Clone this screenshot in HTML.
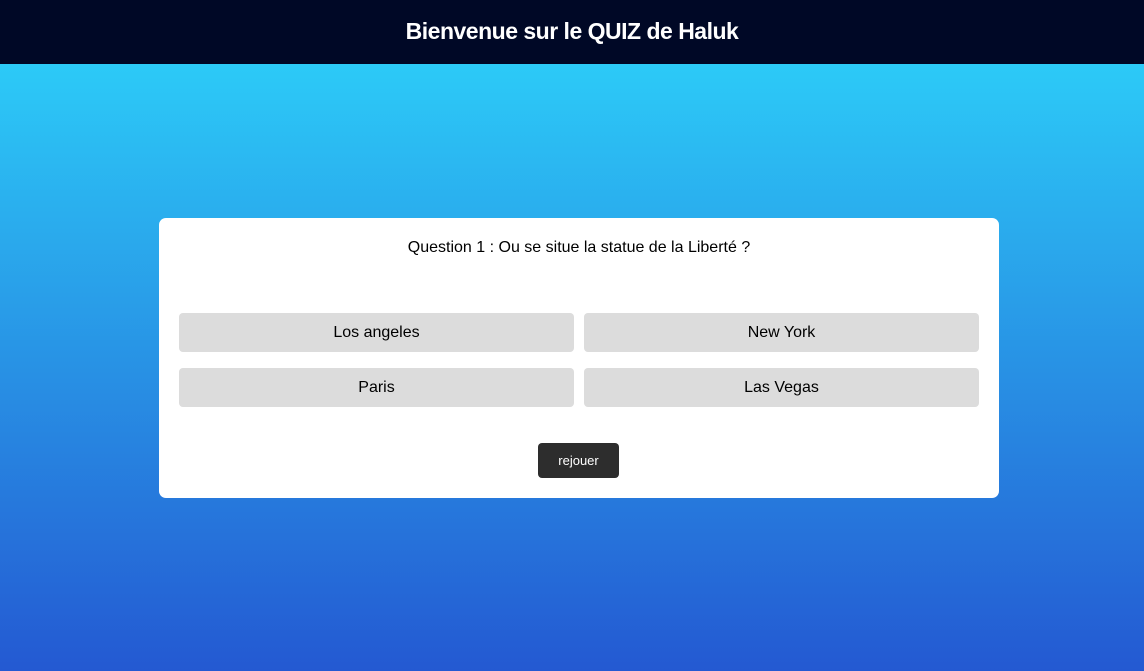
<!DOCTYPE html>
<html><head><meta charset="utf-8"><style>
*{margin:0;padding:0;box-sizing:border-box}
body{width:1144px;height:671px;overflow:hidden;font-family:"Liberation Sans",sans-serif;background:linear-gradient(#2dd6fb,#2459d2);position:relative}
header{height:64px;background:#000826;color:#fff;text-align:center;font-weight:bold;font-size:23px;line-height:62px;letter-spacing:-0.5px}
.card{position:absolute;left:159px;top:218px;width:840px;height:280px;background:#fff;border-radius:7px}
.q{position:absolute;top:21px;width:100%;text-align:center;font-size:16px;color:#000}
.b{position:absolute;width:395px;height:39px;background:#dcdcdc;border-radius:4px;text-align:center;line-height:39px;font-size:16px;color:#000}
.r{position:absolute;left:379px;top:225px;width:81px;height:35px;background:#2d2d2d;color:#fff;border-radius:4px;text-align:center;line-height:35px;font-size:13px}
</style></head><body>
<header>Bienvenue sur le QUIZ de Haluk</header>
<div class="card">
<div class="q">Question 1 : Ou se situe la statue de la Liberté ?</div>
<div class="b" style="left:20px;top:95px">Los angeles</div>
<div class="b" style="left:425px;top:95px">New York</div>
<div class="b" style="left:20px;top:150px">Paris</div>
<div class="b" style="left:425px;top:150px">Las Vegas</div>
<div class="r">rejouer</div>
</div>
</body></html>
